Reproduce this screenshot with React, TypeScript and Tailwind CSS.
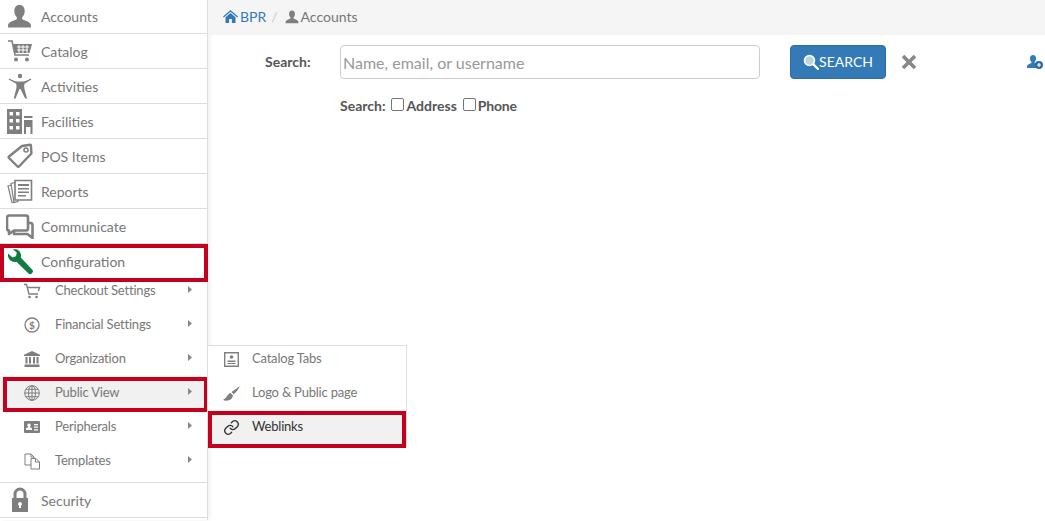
import type { ReactNode } from 'react';

const gray = '#7f7f7f';

function Svg({ size, children, vb = '0 0 24 24', className = '' }: { size: number; children: ReactNode; vb?: string; className?: string }) {
  return (
    <svg width={size} height={size} viewBox={vb} fill={gray} className={className}>
      {children}
    </svg>
  );
}

const PersonPath = 'M12 1c-3.400 0-5 2.600-5 5.800 0 2.400.8 4.400 2.400 5.800v2c-2.400 1.400-7.400 2.200-8.400 5.400v2.500h22V20c-1-3.200-6-4-8.400-5.400v-2c1.600-1.400 2.400-3.400 2.400-5.800C17 3.600 15.400 1 12 1z';

const UserIcon = () => <Svg size={25}><path d={PersonPath} /></Svg>;

const CartIcon = () => (
  <svg width="26" height="24" viewBox="0 0 26 24">
    <path d="M1 2h4l3 14h14" fill="none" stroke={gray} strokeWidth="1.600" />
    <path d="M6 5h19l-2.500 9H8z" fill={gray} />
    <path d="M10 8h12M10 11h11M12 6v8M16 6v8M20 6v8" stroke="#fff" strokeWidth="1" />
    <circle cx="9" cy="20.500" r="2" fill={gray} />
    <circle cx="20" cy="20.500" r="2" fill={gray} />
  </svg>
);

const ActivityIcon = () => (
  <svg width="24" height="26" viewBox="0 0 24 26">
    <circle cx="12" cy="3" r="2.200" fill={gray} />
    <path d="M1 5.500c3 1.500 5.500 2.800 8.500 3h5c3-.2 5.500-1.500 8.500-3l.3.9-6.800 4.400c-.4 1.500-.4 3-.2 4.500l2.700 10.200h-1.800L12.500 16h-1L7.500 25.500H5.700l2.700-10.200c.2-1.500.2-3-.2-4.500L.7 6.400z" fill={gray} />
  </svg>
);

const BuildingIcon = () => (
  <svg width="26" height="25" viewBox="0 0 26 25">
    <path fillRule="evenodd" d="M0 0h15v25H0zM2.500 3v3.500H6V3zM9 3v3.500h3.500V3zM2.500 10v3.500H6V10zM9 10v3.500h3.500V10zM2.500 17v3.500H6V17zM9 17v3.500h3.500V17z" fill={gray} />
    <path d="M17 7h8.500v2H17zM17 11h8.500v14H23.500v-7h-4.500v7H17z" fill={gray} />
  </svg>
);

const TagIcon = () => (
  <svg width="26" height="26" viewBox="0 0 26 26">
    <path d="M15 3l8-1.200c.6 0 1 .4 1 1l.4 7.700L12 23.500c-.5.500-1 .5-1.500 0L2 15c-.5-.5-.5-1 0-1.500z" fill="none" stroke={gray} strokeWidth="2.400" strokeLinejoin="round" />
    <circle cx="19" cy="7" r="2" fill="none" stroke={gray} strokeWidth="1.600" />
  </svg>
);

const ReportIcon = () => (
  <svg width="26" height="25" viewBox="0 0 26 25">
    <path d="M1 7l4-1 3 17-3 .5z" fill="#fff" stroke={gray} strokeWidth="1.200" />
    <path d="M4 4.500l4-1 3 19-4 1z" fill="#fff" stroke={gray} strokeWidth="1.200" />
    <path d="M8 1.500h16.500v19.500H8z" fill="#fff" stroke={gray} strokeWidth="1.600" />
    <path d="M11 5h11v2H11zM11 9h11v1.500H11zM11 12.500h11V14H11zM11 16h8v1.500h-8z" fill={gray} />
  </svg>
);

const ChatIcon = () => (
  <svg width="28" height="25" viewBox="0 0 28 25">
    <path d="M8 9h17a2 2 0 0 1 1.500 2v13l-5-4H8z" fill="none" stroke={gray} strokeWidth="2.600" strokeLinejoin="round" />
    <path d="M3 1.500h17a2 2 0 0 1 2 2v11a2 2 0 0 1-2 2H8l-5 3.500v-3.500a2 2 0 0 1-2-2v-11a2 2 0 0 1 2-2z" fill="#fff" stroke={gray} strokeWidth="2.600" strokeLinejoin="round" />
  </svg>
);

const WrenchIcon = () => (
  <svg width="26" height="26" viewBox="0 0 26 26">
    <path d="M1 4.500l4.500 4 3.500-1.200L9.800 3.500 6 .5C9.500-.5 13.500 1.500 14 6c.1.900 0 1.700-.2 2.400L25.500 21c.8 1 .5 2.300-.5 3.300-1 1-2.500 1.200-3.500.2L9.500 12.800C5 14 .2 10.500 1 4.500z" fill="#107a3f" />
  </svg>
);

const LockIcon = () => (
  <svg width="24" height="26" viewBox="0 0 24 26">
    <path d="M7 12V7a5 5 0 0 1 10 0v5" fill="none" stroke={gray} strokeWidth="3" />
    <path fillRule="evenodd" d="M4 11h16v14H4zM12 15a2 2 0 0 0-1 3.700V21h2v-2.300A2 2 0 0 0 12 15z" fill={gray} />
  </svg>
);

const SmallCart = () => (
  <svg width="18" height="16" viewBox="0 0 18 16">
    <path d="M1 1.500h2.500L6 11h9M4 4.500h12.500L15.500 8" fill="none" stroke={gray} strokeWidth="1.400" />
    <circle cx="6.500" cy="14" r="1.300" fill={gray} />
    <circle cx="13.500" cy="14" r="1.300" fill={gray} />
  </svg>
);

const DollarIcon = () => (
  <svg width="16" height="16" viewBox="0 0 16 16">
    <circle cx="8" cy="8" r="7" fill="none" stroke={gray} strokeWidth="1.300" />
    <text x="8" y="11.500" textAnchor="middle" fontSize="10" fontFamily="Lato" fontWeight="700" fill={gray}>$</text>
  </svg>
);

const BankIcon = () => (
  <svg width="16" height="16" viewBox="0 0 16 16">
    <path d="M8 0l8 3.800V5H0V3.800z" fill={gray} />
    <path d="M1.500 6h2v6.500h-2zM5 6h2v6.500H5zM9 6h2v6.500H9zM12.500 6h2v6.500h-2zM.5 13.500h15V16H.5z" fill={gray} />
  </svg>
);

const GlobeIcon = () => (
  <svg width="16" height="16" viewBox="0 0 16 16" fill="none" stroke={gray} strokeWidth="1">
    <circle cx="8" cy="8" r="7.300" />
    <ellipse cx="8" cy="8" rx="3.500" ry="7.300" />
    <path d="M8 .7v14.600M.7 8h14.600M1.800 4.300h12.400M1.800 11.700h12.400" />
  </svg>
);

const IdCardIcon = () => (
  <svg width="16" height="12" viewBox="0 0 16 12">
    <path fillRule="evenodd" d="M1 0h14a1 1 0 0 1 1 1v10a1 1 0 0 1-1 1H1a1 1 0 0 1-1-1V1a1 1 0 0 1 1-1zm9 3v1.200h4V3zm0 2.600v1.200h4V5.600zm0 2.600v1.200h4V8.200zM5 2.500a1.700 1.700 0 0 0-1 3.100v.7c-1 .3-2 .6-2 1.500v1.200h6V7.800c0-.9-1-1.200-2-1.500v-.7a1.700 1.700 0 0 0-1-3.100z" fill={gray} />
  </svg>
);

const CopyIcon = () => (
  <svg width="17" height="17" viewBox="0 0 17 17" fill="none" stroke={gray} strokeWidth="1">
    <path d="M1 1h6l3 3v8H1z" />
    <path d="M7 5.500h5l3.500 3.500v7H7z" fill="#fff" />
    <path d="M7 1v3h3M11.500 5.500V9h4" />
  </svg>
);

const TabsIcon = () => (
  <svg width="15" height="15" viewBox="0 0 15 15">
    <path d="M.7.7h13.600v13.600H.7z" fill="none" stroke={gray} strokeWidth="1.400" />
    <circle cx="7.500" cy="5" r="1.800" fill={gray} />
    <path d="M3.500 8.500h8V10h-8zM3.500 11h8v1h-8z" fill={gray} />
  </svg>
);

const BrushIcon = () => (
  <svg width="17" height="15" viewBox="0 0 17 15">
    <path d="M17 0L8.500 6l2 2.200C13.500 6 15.500 3 17 0zM7.500 7C4.500 7.500 5 11 0 14c4 1.500 9 .5 10-4.500z" fill={gray} />
  </svg>
);

const LinkIcon = () => (
  <svg width="17" height="17" viewBox="0 0 24 24" fill="none" stroke="#333" strokeWidth="1.900" strokeLinecap="round">
    <path d="M10 13a5 5 0 0 0 7.500.5l3-3a5 5 0 0 0-7-7l-1.700 1.700" />
    <path d="M14 11a5 5 0 0 0-7.500-.5l-3 3a5 5 0 0 0 7 7l1.700-1.700" />
  </svg>
);

const mainTop: [string, ReactNode][] = [
  ['Accounts', <UserIcon />],
  ['Catalog', <CartIcon />],
  ['Activities', <ActivityIcon />],
  ['Facilities', <BuildingIcon />],
  ['POS Items', <TagIcon />],
  ['Reports', <ReportIcon />],
  ['Communicate', <ChatIcon />],
];

const subItems: [string, ReactNode][] = [
  ['Checkout Settings', <SmallCart />],
  ['Financial Settings', <DollarIcon />],
  ['Organization', <BankIcon />],
  ['Public View', <GlobeIcon />],
  ['Peripherals', <IdCardIcon />],
  ['Templates', <CopyIcon />],
];

function MainRow({ label, icon, border = true }: { label: string; icon: ReactNode; border?: boolean }) {
  return (
    <div className={`flex items-center h-[35px] shrink-0 ${border ? 'border-b border-[#ddd]' : ''}`}>
      <div className="w-[41px] flex justify-center pr-[2px] shrink-0">{icon}</div>
      <span className="text-[14px] text-[#777]">{label}</span>
    </div>
  );
}

function SubRow({ label, icon, active }: { label: string; icon: ReactNode; active?: boolean }) {
  return (
    <div className={`flex items-center h-[34px] shrink-0 relative ${active ? 'bg-[#f1f1f1]' : ''}`}>
      <div className="w-[55px] flex justify-center pl-[15px] pr-[6px] shrink-0">{icon}</div>
      <span className="text-[13px] tracking-[-0.2px] text-[#777] flex-1">{label}</span>
      <svg width="4" height="7" viewBox="0 0 4 7" className="mr-[15px] mb-[4px]" fill="#888">
        <path d="M0 0l4 3.500L0 7z" />
      </svg>
      {active && <div className="absolute left-[3px] right-[-1px] top-[1px] bottom-[-2px] border-[4px] border-[#c4001f]" />}
    </div>
  );
}

function FlyoutRow({ label, icon, active }: { label: string; icon: ReactNode; active?: boolean }) {
  return (
    <div className={`flex items-center h-[34px] relative ${active ? 'bg-[#f1f1f1] text-[#333]' : 'text-[#777]'}`}>
      <div className="w-[44px] flex justify-center pl-[3px] shrink-0">{icon}</div>
      <span className="text-[13px] tracking-[-0.2px]">{label}</span>
      {active && <div className="absolute left-0 right-0 top-[1px] bottom-[-4px] border-[4px] border-[#c4001f]" />}
    </div>
  );
}

export default function App() {
  return (
    <div className="flex h-[521px] w-[1045px] overflow-hidden bg-white font-['Lato',sans-serif] relative">
      {/* Left nav */}
      <div className="w-[208px] shrink-0 h-full border-r border-[#ddd] shadow-[2px_0_4px_rgba(0,0,0,0.06)] flex flex-col -mt-px">
        {mainTop.map(([label, icon]) => (
          <MainRow key={label} label={label} icon={icon} />
        ))}
        <MainRow label="Configuration" icon={<WrenchIcon />} border={false} />
        <div className="flex flex-col -mt-[5px] pb-[4px] border-b border-[#ddd] relative">
          {subItems.map(([label, icon]) => (
            <SubRow key={label} label={label} icon={icon} active={label === 'Public View'} />
          ))}
          <div className="absolute left-0 right-[-1px] top-[-30px] h-[38px] border-[4px] border-[#c4001f]" />
        </div>
        <MainRow label="Security" icon={<LockIcon />} />
      </div>

      {/* Flyout menu */}
      <div className="absolute left-[207px] top-[345px] w-[200px] h-[103px] bg-white border border-[#ddd] z-10">
        <div className="-mt-[4px]">
          <FlyoutRow label="Catalog Tabs" icon={<TabsIcon />} />
          <FlyoutRow label="Logo &amp; Public page" icon={<BrushIcon />} />
          <FlyoutRow label="Weblinks" icon={<LinkIcon />} active />
        </div>
      </div>

      {/* Page */}
      <div className="flex-1 min-w-0">
        <div className="h-[35px] bg-[#f5f5f5] flex items-center pl-[15px] pb-[2px] text-[14px]">
          <svg width="15" height="13" viewBox="0 0 15 13" fill="#337ab7" className="mr-[2px]">
            <path d="M7.500 0L15 6.500l-.8.9L7.500 1.800.8 7.400 0 6.500z" />
            <path d="M7.500 3L2.500 7.200V13h3.600V9h2.800v4h3.600V7.200z" />
          </svg>
          <span className="text-[#337ab7]">BPR</span>
          <span className="text-[#ccc] ml-[5px] mr-[7px]">/</span>
          <Svg size={14} className="mr-[2px]"><path d={PersonPath} /></Svg>
          <span className="text-[#777]">Accounts</span>
        </div>

        <div className="flex items-start pt-[10px]">
          <label className="w-[132px] pl-[57px] pt-[6px] text-[14px] font-bold text-[#555]">Search:</label>
          <div className="w-[420px] shrink-0">
            <input
              placeholder="Name, email, or username"
              className="w-full h-[34px] border border-[#ccc] rounded-[4px] px-[2px] text-[16px] placeholder:text-[#999] outline-none"
            />
            <div className="flex items-center mt-[16px] text-[14px] font-bold text-[#555]">
              <span>Search:</span>
              <span className="w-[13px] h-[13px] border border-[#767676] rounded-[2px] ml-[5px] mr-[3px] mb-[3px]" />
              <span>Address</span>
              <span className="w-[13px] h-[13px] border border-[#767676] rounded-[2px] ml-[6px] mr-[2px] mb-[3px]" />
              <span className="tracking-[-0.2px]">Phone</span>
            </div>
          </div>
          <button className="ml-[30px] w-[96px] h-[34px] bg-[#337ab7] border border-[#2e6da4] rounded-[4px] flex items-center justify-center pb-[1px] text-white text-[14px]">
            <svg width="16" height="16" viewBox="0 0 16 16">
              <circle cx="6.500" cy="6.500" r="5" fill="#bcd3e6" stroke="#fff" strokeWidth="1.600" />
              <path d="M10.500 10.500L15 15" stroke="#fff" strokeWidth="2.400" strokeLinecap="round" />
            </svg>
            SEARCH
          </button>
          <svg width="16" height="16" viewBox="0 0 16 16" className="ml-[15px] mt-[9px]">
            <path d="M2 2l12 12M14 2L2 14" stroke="#888" strokeWidth="3.600" />
          </svg>
          <svg width="16" height="14" viewBox="0 0 16 14" className="ml-[110px] mt-[10px]">
            <path d="M6 0C4 0 3 1.500 3 3.500c0 1.400.5 2.600 1.400 3.400v1C3 8.800.5 9.300 0 11v2h9V8.500L7.600 7.500v-.6C8.500 6.100 9 4.900 9 3.500 9 1.500 8 0 6 0z" fill="#337ab7" />
            <circle cx="12" cy="10" r="4" fill="#2e6da4" />
            <path d="M10 10h4M12 8v4" stroke="#fff" strokeWidth="1.200" />
          </svg>
        </div>
      </div>
    </div>
  );
}
